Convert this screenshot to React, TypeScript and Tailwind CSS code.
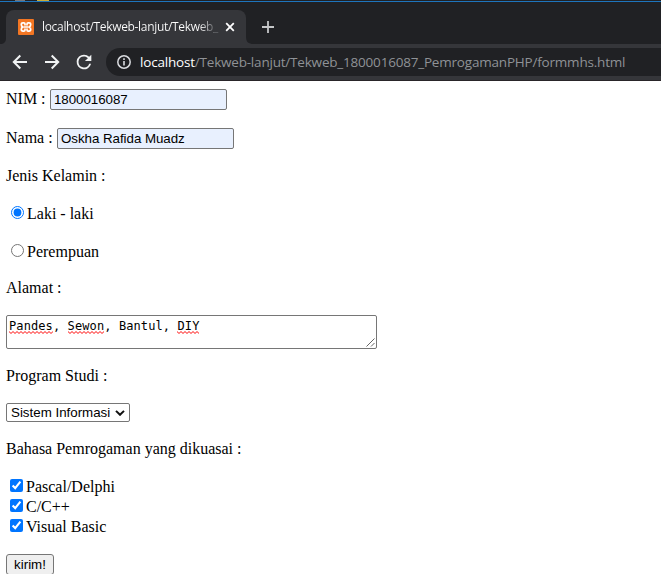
import type { ReactNode } from "react";

const serif = "font-['Liberation_Serif','Times_New_Roman',serif]";
const sans = "font-['Liberation_Sans',Arial,sans-serif]";
const ui = "font-['Open_Sans','Noto_Sans',sans-serif]";

function Line({ children, className = "" }: { children: ReactNode; className?: string }) {
  return <p className={`h-[18px] whitespace-nowrap leading-[18px] ${className}`}>{children}</p>;
}

function Misspelt({ children }: { children: string }) {
  return (
    <span className="relative inline-block">
      {children}
      <svg className="absolute left-0 top-[12px] h-[3px] w-full">
        <defs>
          <pattern id="wave" width="4" height="3" patternUnits="userSpaceOnUse">
            <path d="M-1 1.500 0 .5 2 2.500 4 .5 5 1.500" fill="none" stroke="#ff0000" strokeWidth="1" />
          </pattern>
        </defs>
        <rect width="100%" height="3" fill="url(#wave)" />
      </svg>
    </span>
  );
}

function TextField({ label, value, labelWidth }: { label: string; value: string; labelWidth: string }) {
  return (
    <label className="flex h-[21px] items-start">
      <span className={`${labelWidth} mt-px shrink-0 whitespace-nowrap leading-[18px]`}>{label}</span>
      <input
        defaultValue={value}
        spellCheck={false}
        className={`${sans} h-[21px] w-[177px] rounded-[2px] border border-[#767676] bg-[#e8f0fe] px-[3px] py-0 text-[13.333px] leading-[15px] tracking-[-0.04px] text-black outline-none`}
      />
    </label>
  );
}

function Radio({ label, checked }: { label: string; checked?: boolean }) {
  return (
    <label className="flex h-[18px] items-start pl-[5px]">
      <input type="radio" name="jk" defaultChecked={checked} className="m-0 mt-px size-[13px]" />
      <span className="ml-[3px] leading-[18px]">{label}</span>
    </label>
  );
}

function Check({ label }: { label: string }) {
  return (
    <label className="flex h-5 items-start pl-1">
      <input type="checkbox" defaultChecked className="m-0 mt-px size-[13px]" />
      <span className="ml-[3px] leading-[18px]">{label}</span>
    </label>
  );
}

function Browser() {
  return (
    <header className={`${ui} h-[81px] bg-[#202124]`}>
      <div className="flex h-px bg-[#202124]">
        <span className="ml-[15px] w-[10px] bg-[#77777a]" />
        <span className="ml-3 w-3 bg-[#c9ad3c]" />
      </div>
      <div className="h-px bg-[#1d75bd]" />
      <div className="flex h-[42px] items-end">
        <svg className="h-[6px] w-[6px]" viewBox="0 0 6 6"><path d="M6 0v6H0c4 0 6-2 6-6Z" fill="#35363a" /></svg>
        <div className="flex h-[34px] w-[240px] items-center rounded-t-[8px] bg-[#35363a]">
          <svg className="ml-3 size-4 shrink-0" viewBox="0 0 16 16">
            <rect width="16" height="16" rx="1" fill="#f37623" />
            <g fill="none" stroke="#fff" strokeWidth="1.700" strokeLinecap="round" strokeLinejoin="round">
              <path d="M7 5.800V5Q7 3.900 5.800 3.900H5Q3.300 3.900 3.300 5.500 3.300 7.200 4.700 8 3.300 8.800 3.300 10.500 3.300 12.100 5 12.100h.8Q7 12.100 7 11v-.8" />
              <path d="M9 5.800V5Q9 3.900 10.200 3.900H11Q12.700 3.900 12.700 5.500 12.700 7.200 11.300 8 12.700 8.800 12.700 10.500 12.700 12.100 11 12.100h-.8Q9 12.100 9 11v-.8" />
              <path d="M6 8h4" />
            </g>
          </svg>
          <span className="ml-2 w-[178px] whitespace-nowrap bg-linear-to-r from-white from-[88%] to-[#65666a] to-[97%] bg-clip-text text-[12px] leading-[18px] tracking-[-0.32px] text-transparent">
            localhost/Tekweb-lanjut/Tekweb_
          </span>
          <svg className="ml-[5px] size-[10px] shrink-0" viewBox="0 0 10 10"><path d="m1.200 1.200 7.600 7.600m0-7.600L1.200 8.800" stroke="#fff" strokeWidth="1.800" /></svg>
        </div>
        <svg className="h-[8px] w-[8px]" viewBox="0 0 8 8"><path d="M0 0c0 6 2 8 8 8H0Z" fill="#35363a" /></svg>
        <svg className="mb-[11px] ml-[8px] size-3" viewBox="0 0 12 12"><path d="M6 0v12M0 6h12" stroke="#c5c6c8" strokeWidth="1.800" /></svg>
      </div>
      <div className="flex h-9 items-center bg-[#35363a]">
        <svg className="ml-[11px] size-[18px]" viewBox="0 0 18 18"><path d="M16 9H3m6.300-6.500L2.800 9l6.500 6.500" fill="none" stroke="#f1f3f4" strokeWidth="2" /></svg>
        <svg className="ml-[14px] size-[18px]" viewBox="0 0 18 18"><path d="M2 9h13M8.700 2.500 15.200 9l-6.500 6.500" fill="none" stroke="#f1f3f4" strokeWidth="2" /></svg>
        <svg className="ml-[12px] size-[22px]" viewBox="0 0 24 24"><path d="M17.65 6.350A7.960 7.960 0 0 0 12 4a8 8 0 1 0 7.730 10h-2.080A6 6 0 1 1 12 6c1.660 0 3.140.69 4.220 1.780L13 11h7V4z" fill="#f1f3f4" /></svg>
        <div className="ml-[11px] flex h-7 flex-1 items-center rounded-l-full bg-[#202124] pl-[11px]">
          <svg className="size-[14px] shrink-0" viewBox="0 0 14 14">
            <circle cx="7" cy="7" r="6.200" fill="none" stroke="#dadce0" strokeWidth="1.500" />
            <path d="M7 6v4.500M7 3.300v1.700" stroke="#dadce0" strokeWidth="1.600" />
          </svg>
          <span className="ml-[9px] whitespace-nowrap text-[13.5px] leading-5 tracking-[-0.2px] text-[#8f9296]">
            <span className="text-white">localhost</span>/Tekweb-lanjut/Tekweb_1800016087_PemrogamanPHP/formmhs.html
          </span>
        </div>
      </div>
      <div className="h-px bg-[#292529]" />
    </header>
  );
}

export default function App() {
  return (
    <div className="h-[574px] w-[661px] overflow-hidden bg-white">
      <Browser />
      <form className={`${serif} flex flex-col pl-[6px] pt-2 text-[16px] text-black`} onSubmit={(e) => e.preventDefault()}>
        <TextField label="NIM :" value="1800016087" labelWidth="w-[44px]" />
        <div className="h-[18px]" />
        <TextField label="Nama :" value="Oskha Rafida Muadz" labelWidth="w-[51px]" />
        <Line className="mt-[18px]">Jenis Kelamin :</Line>
        <div className="mt-5 flex flex-col gap-5">
          <Radio label="Laki - laki" checked />
          <Radio label="Perempuan" />
        </div>
        <Line className="mt-[18px]">Alamat :</Line>
        <div className="relative mt-[18px] h-[34px] w-[371px] rounded-[2px] border border-[#767676] px-[2px] pt-[3px] font-['DejaVu_Sans_Mono',monospace] text-[12px] leading-[15px] tracking-[0.1px]">
          <Misspelt>Pandes</Misspelt>, <Misspelt>Sewon</Misspelt>, Bantul, <Misspelt>DIY</Misspelt>
          <svg className="absolute bottom-px right-px size-[9px]" viewBox="0 0 9 9"><path d="M.5 8.500l8-8M5 8.500l3.500-3.500" stroke="#555" strokeWidth=".9" /></svg>
        </div>
        <Line className="mt-[18px]">Program Studi :</Line>
        <div className={`${sans} mt-[18px] flex h-[19px] w-[124px] items-center rounded-[2px] border border-[#767676] pl-1 text-[13.333px] leading-[17px]`}>
          <span className="w-[104px] whitespace-nowrap">Sistem Informasi</span>
          <svg className="h-[6px] w-[10px] shrink-0" viewBox="0 0 10 6"><path d="m1 .9 4 3.900L9 .9" fill="none" stroke="#101010" strokeWidth="2" /></svg>
        </div>
        <Line className="mt-[18px]">Bahasa Pemrogaman yang dikuasai :</Line>
        <div className="mt-5">
          <Check label="Pascal/Delphi" />
          <Check label="C/C++" />
          <Check label="Visual Basic" />
        </div>
        <button className={`${sans} mt-4 h-[21px] w-[48px] rounded-[3px] border border-[#767676] bg-[#efefef] p-0 text-[13.333px] leading-[19px] text-black`}>
          kirim!
        </button>
      </form>
    </div>
  );
}
